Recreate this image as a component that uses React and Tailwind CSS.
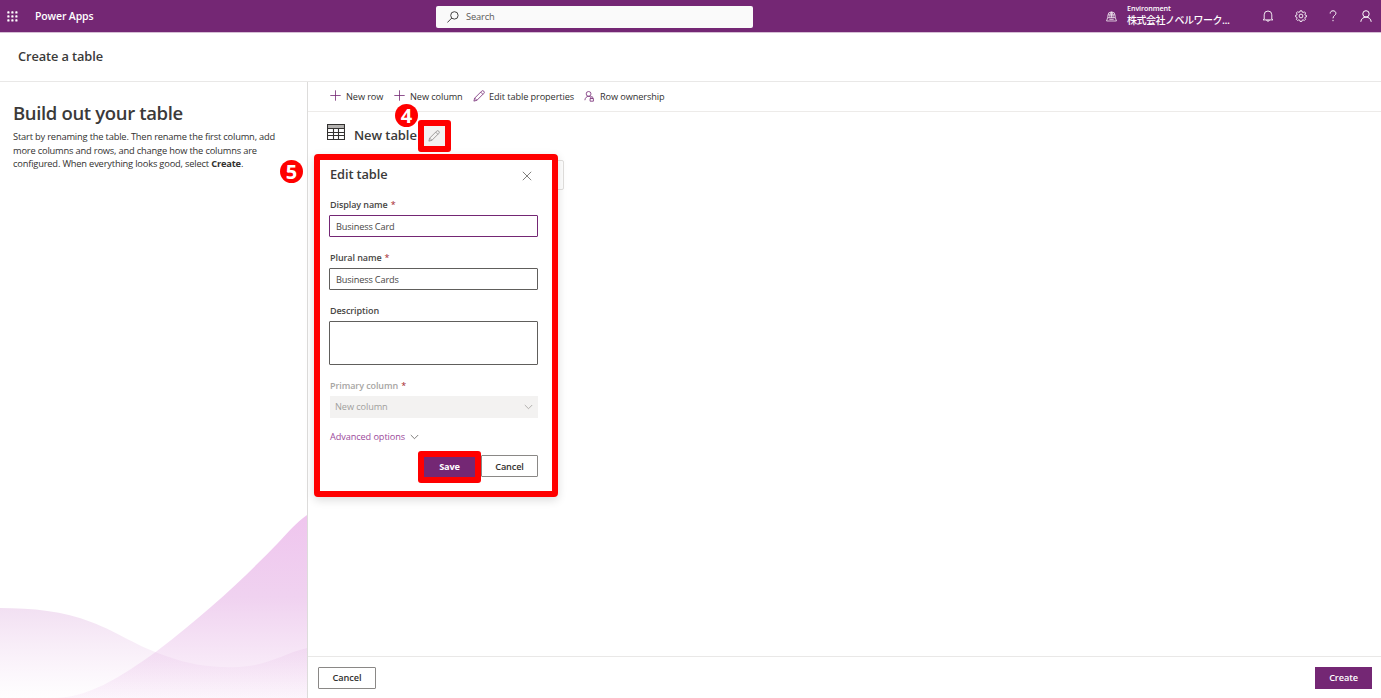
import React from "react";

const COMMANDS = [
  { label: "New row", icon: PlusIcon, box: "w-[54px] mr-[10px]" },
  { label: "New column", icon: PlusIcon, box: "w-[69px] mr-[10px]" },
  { label: "Edit table properties", icon: PencilIcon, box: "w-[101px] mr-[10px]" },
  { label: "Row ownership", icon: OwnerIcon, box: "w-[80px]" },
];

function PlusIcon({ className = "" }) {
  return (
    <svg viewBox="0 0 12 12" className={`size-3 ${className}`} fill="none" stroke="currentColor" strokeWidth="0.8">
      <path d="M5.500.3v10.400M.3 5.500h10.400" />
    </svg>
  );
}

function PencilIcon({ className = "" }) {
  return (
    <svg viewBox="0 0 12 12" className={`size-3 ${className}`} fill="none" stroke="currentColor" strokeWidth="0.8" strokeLinejoin="round">
      <path d="M.9 11.100l.8-3L8.600 1.200a1.550 1.550 0 0 1 2.200 2.200L3.900 10.300zM7.700 2.100l2.200 2.200M1.700 8.100l2.200 2.200" />
    </svg>
  );
}

function OwnerIcon({ className = "" }) {
  return (
    <svg viewBox="0 0 12 12" className={`size-3 ${className}`} fill="none" stroke="currentColor" strokeWidth="0.8">
      <circle cx="4.600" cy="3.900" r="2.400" />
      <path d="M.9 10.200c.2-2.400 1.800-3.900 3.700-3.900 1 0 1.700.3 2.300.8" />
      <path d="M6.100 8.500h3.300v2.700H6.100zM6.900 8.500V7.500a.9.900 0 0 1 1.800 0v1" />
    </svg>
  );
}

function ChevronIcon({ className = "" }) {
  return (
    <svg viewBox="0 0 9 6" className={`w-[9px] h-1.5 ${className}`} fill="none" stroke="currentColor" strokeWidth="0.8">
      <path d="M.8 1l3.700 3.700L8.200 1" />
    </svg>
  );
}

function GearIcon() {
  return (
    <svg viewBox="0 0 12 12" className="size-3" fill="none" stroke="currentColor" strokeWidth="0.9" strokeLinejoin="round">
      <path d="M5.100.8h1.800l.3 1.300 1 .4 1.200-.7 1.200 1.200-.7 1.200.4 1 1.200.3v1.300l-1.300.3-.4 1 .7 1.200-1.200 1.200-1.200-.7-1 .4-.3 1.300H5.100l-.3-1.300-1-.4-1.200.7-1.200-1.200.7-1.200-.4-1L.5 6.700V5.400l1.200-.3.4-1-.7-1.200 1.200-1.200 1.200.7 1-.4z" />
      <circle cx="6" cy="6" r="1.900" />
    </svg>
  );
}

function Label({ children, required = true, muted = false }) {
  return (
    <div className={`pl-px h-[14px] leading-[14px] text-[9px] font-semibold tracking-[-0.08px] whitespace-nowrap ${muted ? "text-[#a7a5a3]" : "text-[#484644]"}`}>
      {children}
      {required && <span className="ml-[3px] font-normal text-[#a4262c]">*</span>}
    </div>
  );
}

function StepBadge({ children, className }) {
  return (
    <div className={`absolute size-[23px] rounded-full bg-[#ff0000] text-white text-[20px] font-bold leading-[23px] text-center ${className}`}>
      {children}
    </div>
  );
}

function TopBar() {
  return (
    <header className="h-[33px] shrink-0 bg-[#742774] border-b border-[#d5bed5] text-white flex items-center">
      <svg viewBox="0 0 11 11" className="size-[11px] ml-[7px] mr-[17px]" fill="currentColor">
        {[0, 4, 8].map((y) =>
          [0, 4, 8].map((x) => <rect key={`${x}-${y}`} x={x + 0.3} y={y + 0.3} width="2.200" height="2.200" rx="0.600" />)
        )}
      </svg>
      <span className="w-[401px] pt-px text-[10.500px] font-semibold tracking-[-0.15px]">Power Apps</span>
      <div className="mt-px w-[317px] h-[22px] rounded-[2px] bg-[#fafafa] flex items-center text-[#5a5856]">
        <svg viewBox="0 0 12 12" className="size-3 ml-[11px] mr-[7px] text-[#323130]" fill="none" stroke="currentColor" strokeWidth="0.900">
          <circle cx="7.400" cy="4.400" r="3.700" />
          <path d="M4.800 7L.4 11.500" />
        </svg>
        <span className="text-[9.300px] tracking-[-0.15px]">Search</span>
      </div>
      <div className="ml-auto flex items-center">
        <svg viewBox="0 0 12 12" className="size-[11px] mr-[10px]" fill="none" stroke="currentColor" strokeWidth="0.800">
          <path d="M2 7.300V5a4 4 0 0 1 8 0v2.300M6 1v6.300M2.200 4.300h7.600M4.300 7.300C4 4.500 4.600 1.800 6 1c1.400.8 2 3.500 1.700 6.300" />
          <path d="M1.800 7.300h8.400l1.200 3.600H.6zM3.600 9.100h4.800" />
        </svg>
        <div className="w-[135px] mb-[3px] whitespace-nowrap">
          <div className="text-[7.200px] leading-[9px] font-semibold tracking-[-0.1px]">Environment</div>
          <div className="text-[10px] leading-[13px] tracking-[-0.5px] font-medium font-['Noto_Sans_CJK_JP',sans-serif]">株式会社ノベルワーク...</div>
        </div>
        <svg viewBox="0 0 12 12" className="size-3 mr-[21px]" fill="none" stroke="currentColor" strokeWidth="0.900">
          <path d="M2.200 9V4.800a3.800 3.800 0 0 1 7.600 0V9l1.100.9H1.100zM4.600 10c.2 1.700 2.600 1.700 2.800 0" />
        </svg>
        <GearIcon />
        <svg viewBox="0 0 12 12" className="size-3 ml-5 mr-[21px]" fill="none" stroke="currentColor" strokeWidth="1">
          <path d="M3.200 3.500C3.200 1.800 4.300.8 6 .8s2.900 1 2.900 2.500C8.900 5.400 6 5.600 6 8.300M6 9.900v1.300" />
        </svg>
        <svg viewBox="0 0 12 12" className="size-3 mr-[9px]" fill="none" stroke="currentColor" strokeWidth="1">
          <circle cx="6" cy="3.900" r="3.200" />
          <path d="M.8 11.800C1 9 3.200 7.100 6 7.100s5 1.900 5.200 4.700" />
        </svg>
      </div>
    </header>
  );
}

function IntroPanel() {
  return (
    <aside className="w-[308px] shrink-0 border-r border-[#dddcdb] flex flex-col justify-between">
      <div className="pl-[13px] pt-[19px] text-[#323130]">
        <h2 className="h-6 leading-6 text-[18.500px] font-semibold text-[#3b3a39] whitespace-nowrap tracking-[-0.35px]">Build out your table</h2>
        <p className="mt-[5px] text-[9.300px] leading-[13.700px] tracking-[-0.18px] whitespace-nowrap">
          Start by renaming the table. Then rename the first column, add
          <br />
          more columns and rows, and change how the columns are
          <br />
          configured. When everything looks good, select <b>Create</b>.
        </p>
      </div>
      <svg viewBox="0 0 307 184" className="block w-[307px] h-[184px]">
        <defs>
          <linearGradient id="hill" x1="0" y1="0" x2="0" y2="1">
            <stop offset="0" stopColor="#efc5ee" />
            <stop offset="0.450" stopColor="#f0d2f0" />
            <stop offset="1" stopColor="#fcf6fc" />
          </linearGradient>
          <linearGradient id="wave" x1="0" y1="0" x2="0" y2="1">
            <stop offset="0" stopColor="#d9a5da" stopOpacity="0.350" />
            <stop offset="1" stopColor="#e6b8e6" stopOpacity="0.020" />
          </linearGradient>
        </defs>
        <path d="M307 1C296 9 289 17 278 29C246 62 208 98 157 137C120 164 87 184 54 184H307z" fill="url(#hill)" />
        <path d="M0 94C32 94 64 97 91 108C120 119 136 132 166 142C196 153 225 155 249 152C272 149 286 139 307 134V184H0z" fill="url(#wave)" />
      </svg>
    </aside>
  );
}

function EditTableCallout() {
  return (
    <section className="absolute left-[6px] top-[72px] w-[244px] h-[343px] border-[6px] border-[#ff0000] rounded-[4px] bg-white shadow-[0_3px_10px_rgba(0,0,0,0.14)] pl-[9px] pr-[14px] pt-[6px]">
      <div className="h-[18px] pl-px flex items-center justify-between">
        <h3 className="text-[12.800px] font-semibold text-[#3b3a39] tracking-[-0.1px]">Edit table</h3>
        <svg viewBox="0 0 10 10" className="size-[10px] mr-[6px] mt-[2px]" fill="none" stroke="#605e5c" strokeWidth="0.800">
          <path d="M.8.8l8.400 8.400M9.200.8L.8 9.200" />
        </svg>
      </div>
      <div className="mt-[14px]"><Label>Display name</Label></div>
      <div className="mt-[3px] h-[22px] rounded-[1px] border border-[#742774] pl-[6px] pt-px flex items-center text-[9.200px] tracking-[-0.15px] text-[#484644]">Business Card</div>
      <div className="mt-[14px]"><Label>Plural name</Label></div>
      <div className="mt-[3px] h-[22px] rounded-[1px] border border-[#605e5c] pl-[6px] pt-px flex items-center text-[9.200px] tracking-[-0.15px] text-[#484644]">Business Cards</div>
      <div className="mt-[14px]"><Label required={false}>Description</Label></div>
      <div className="mt-[3px] h-[44px] rounded-[1px] border border-[#605e5c]" />
      <div className="mt-[14px]"><Label muted>Primary column</Label></div>
      <div className="mt-[3px] ml-px h-[22px] bg-[#f3f2f1] pl-[5px] pr-[5px] flex items-center justify-between text-[9.200px] tracking-[-0.1px] text-[#a19f9d]">
        New column
        <ChevronIcon />
      </div>
      <div className="mt-[12px] ml-px h-[14px] flex items-center text-[9.200px] tracking-[-0.1px] text-[#9b4a9b]">
        Advanced options
        <ChevronIcon className="ml-[5px] text-[#605e5c]" />
      </div>
      <div className="mt-[7px] flex justify-end text-[9.200px] font-semibold">
        <div className="w-[63px] h-8 border-[6px] border-[#ff0000] rounded-[3px] bg-[#742774] text-white font-bold tracking-[-0.15px] flex items-center justify-center">Save</div>
        <div className="mt-[4px] w-[57px] h-[22px] border border-[#8a8886] rounded-[1px] text-[#323130] pt-px tracking-[-0.15px] flex items-center justify-center">Cancel</div>
      </div>
    </section>
  );
}

const App = () => {
  return (
    <div className="w-[1381px] h-[698px] overflow-hidden bg-white flex flex-col font-['Open_Sans','Noto_Sans_CJK_JP',sans-serif] text-[#323130]">
      <TopBar />
      <div className="h-[49px] shrink-0 border-b border-[#e9e8e7] pl-[18px] flex items-center text-[12.800px] font-semibold text-[#3b3a39] tracking-[-0.1px]">
        Create a table
      </div>

      <div className="flex-1 min-h-0 flex">
        <IntroPanel />

        <main className="relative flex-1 flex flex-col">
          <div className="h-[30px] border-b border-[#edebe9] pl-[22px] flex items-center text-[9.200px] tracking-[-0.1px] whitespace-nowrap">
            {COMMANDS.map(({ label, icon: Icon, box }) => (
              <div key={label} className={`flex items-center shrink-0 ${box}`}>
                <Icon className="mr-1 shrink-0 text-[#742774]" />
                <span className="pt-px">{label}</span>
              </div>
            ))}
          </div>

          <div className="h-[48px] pl-[19px] flex items-center">
            <svg viewBox="0 0 18 16" className="w-[18px] h-4 mb-[8px] mr-[9px]" fill="none" stroke="#323130">
              <path d="M1 2.500h16" stroke="#b5b3b1" strokeWidth="3" />
              <path d="M.5.5h17v15H.5zM.5 4.500h17M.5 8.500h17M.5 11.500h17M6.500 4v11.500M11.500 4v11.500" strokeWidth="1.100" />
            </svg>
            <span className="w-[63px] text-[13px] font-semibold text-[#3b3a39] tracking-[-0.08px] whitespace-nowrap">New table</span>
            <div className="ml-px w-[33px] h-8 border-[6px] border-[#ff0000] rounded-[3px] bg-[#f3f2f1] flex items-center justify-center text-[#8a8886]">
              <PencilIcon className="mr-px" />
            </div>
          </div>

          <div className="w-[237px] h-[30px] ml-[19px] border border-[#e1dfdd] rounded-[2px]" />

          <EditTableCallout />
          <StepBadge className="left-[87px] top-[22px]">4</StepBadge>
          <StepBadge className="-left-[28px] top-[78px]">5</StepBadge>

          <footer className="mt-auto h-[42px] border-t border-[#e9e8e7] pl-[10px] pr-[9px] flex items-center justify-between text-[9.200px] font-semibold tracking-[-0.1px]">
            <div className="w-[58px] h-[22px] border border-[#8a8886] rounded-[1px] pt-px flex items-center justify-center">Cancel</div>
            <div className="w-[57px] h-[22px] bg-[#742774] text-white pt-px flex items-center justify-center">Create</div>
          </footer>
        </main>
      </div>
    </div>
  );
};

export default App;
